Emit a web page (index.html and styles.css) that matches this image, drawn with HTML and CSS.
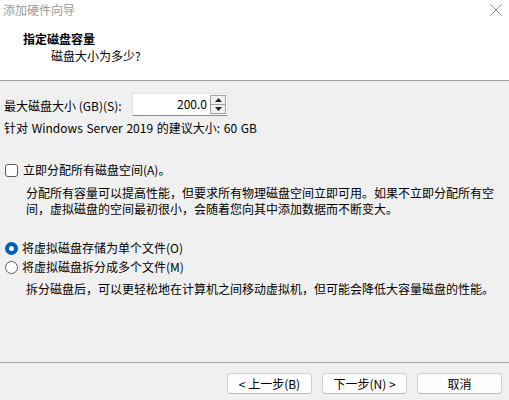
FILE: index.html
```html
<!DOCTYPE html>
<html lang="zh">
<head>
<meta charset="utf-8">
<title>添加硬件向导</title>
<link rel="stylesheet" href="styles.css">
</head>
<body>
<div class="window">
  <header class="header">
    <div class="titlebar">
      <span class="title">添加硬件向导</span>
      <svg class="close" width="12" height="12" viewBox="0 0 12 12"><path d="M0.5 0.5L11.5 11.5M11.5 0.5L0.5 11.5" stroke="#8a8a8a" stroke-width="1" fill="none"/></svg>
    </div>
    <div class="heading">指定磁盘容量</div>
    <div class="subheading">磁盘大小为多少?</div>
  </header>
  <main class="content">
    <div class="size-row">
      <label class="size-label">最大磁盘大小 (GB)(S):</label>
      <div class="spin">
        <div class="spin-field">200.0</div>
        <div class="spin-btns">
          <div class="spin-btn"><svg width="7" height="4" viewBox="0 0 7 4"><path d="M0 4L3.5 0L7 4Z" fill="#222"/></svg></div>
          <div class="spin-btn"><svg width="7" height="4" viewBox="0 0 7 4"><path d="M0 0L7 0L3.5 4Z" fill="#222"/></svg></div>
        </div>
      </div>
    </div>
    <div class="recommend">针对 Windows Server 2019 的建议大小: 60 GB</div>

    <div class="option check-option">
      <span class="checkbox"></span>
      <span>立即分配所有磁盘空间(A)。</span>
    </div>
    <p class="desc check-desc">分配所有容量可以提高性能，但要求所有物理磁盘空间立即可用。如果不立即分配所有空<br>间，虚拟磁盘的空间最初很小，会随着您向其中添加数据而不断变大。</p>

    <div class="option radio-option first">
      <span class="radio checked"></span>
      <span>将虚拟磁盘存储为单个文件(O)</span>
    </div>
    <div class="option radio-option">
      <span class="radio"></span>
      <span>将虚拟磁盘拆分成多个文件(M)</span>
    </div>
    <p class="desc radio-desc">拆分磁盘后，可以更轻松地在计算机之间移动虚拟机，但可能会降低大容量磁盘的性能。</p>
  </main>
  <footer class="footer">
    <button class="btn">&lt; 上一步(B)</button>
    <button class="btn">下一步(N) &gt;</button>
    <button class="btn cancel">取消</button>
  </footer>
</div>
</body>
</html>
```
FILE: styles.css
```css
html, body {
  margin: 0;
  padding: 0;
}
body {
  width: 509px;
  height: 400px;
  overflow: hidden;
  background: #f0f0f0;
  font-family: "Noto Sans CJK SC", "Microsoft YaHei", sans-serif;
  font-size: 12px;
  color: #000;
}
.window {
  display: flex;
  flex-direction: column;
  height: 400px;
}
.header {
  background: #fff;
  height: 80px;
  border-bottom: 1px solid #a0a0a0;
  box-sizing: content-box;
}
.titlebar {
  display: flex;
  justify-content: space-between;
  align-items: center;
  height: 20px;
  padding: 0 7px 0 3px;
}
.title {
  color: #9a9a9a;
  line-height: 20px;
}
.close {
  display: block;
}
.heading {
  font-weight: bold;
  margin: 11px 0 0 23px;
  line-height: 16px;
}
.subheading {
  margin: 1px 0 0 51px;
  line-height: 16px;
}
.content {
  flex: 1;
  padding: 12px 0 0 4px;
}
.size-row {
  display: flex;
  align-items: center;
  height: 23px;
}
.size-label {
  width: 128px;
  line-height: 16px;
  padding-top: 2px;
}
.spin {
  display: flex;
  width: 96px;
  height: 23px;
  background: #fff;
  box-sizing: border-box;
  border: 1px solid #e3e3e3;
  border-bottom-color: #8a8a8a;
}
.spin-field {
  flex: 1;
  text-align: right;
  padding-right: 3px;
  line-height: 20px;
}
.spin-btns {
  display: flex;
  flex-direction: column;
  width: 14px;
  margin: 1px 1px 1px 0;
  border: 1px solid #a0a0a0;
  background: #f0f0f0;
}
.spin-btn {
  flex: 1;
  display: flex;
  align-items: center;
  justify-content: center;
}
.spin-btn + .spin-btn {
  border-top: 1px solid #a0a0a0;
}
.spin-btn svg {
  display: block;
}
.recommend {
  margin-top: 4px;
  line-height: 16px;
  word-spacing: 1px;
}
.option {
  display: flex;
  align-items: center;
  gap: 5px;
  line-height: 16px;
  margin-left: 1px;
}
.check-option {
  margin-top: 26px;
}
.checkbox {
  width: 13px;
  height: 13px;
  box-sizing: border-box;
  border: 1px solid #5a5a5a;
  border-radius: 3px;
  background: #fff;
  flex: none;
}
.radio {
  width: 13px;
  height: 13px;
  box-sizing: border-box;
  border: 1px solid #5a5a5a;
  border-radius: 50%;
  background: #fff;
  flex: none;
  margin-right: -1px;
}
.radio.checked {
  border: 4px solid #005fb8;
}
.desc {
  margin: 0 0 0 22px;
  line-height: 16px;
  white-space: nowrap;
}
.check-desc {
  margin-top: 7px;
}
.radio-desc {
  margin-top: 6px;
}
.radio-option.first {
  margin-top: 23px;
}
.radio-option {
  margin-top: 3px;
}
.footer {
  border-top: 1px solid #a0a0a0;
  display: flex;
  justify-content: flex-end;
  gap: 10px;
  padding: 10px 7px 0 0;
  box-sizing: border-box;
  height: 38px;
}
.btn {
  width: 85px;
  height: 21px;
  background: #fdfdfd;
  border: 1px solid #d0d0d0;
  border-bottom-color: #b8b8b8;
  border-radius: 4px;
  font-family: inherit;
  font-size: 12px;
  color: #000;
  padding: 0;
  line-height: 19px;
}
```
